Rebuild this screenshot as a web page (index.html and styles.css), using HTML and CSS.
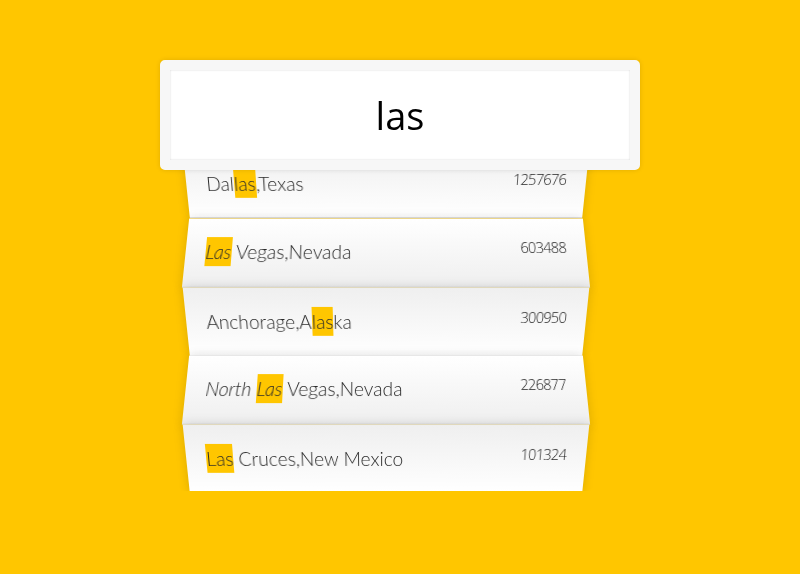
FILE: index.html
```html
<!DOCTYPE html>
<html>
<head>
<meta charset="utf-8">
<title>Type Ahead</title>
<link rel="stylesheet" href="styles.css">
</head>
<body>
  <form class="search-form">
    <input type="text" class="search" value="las" placeholder="City or State">
    <ul class="suggestions">
      <li class="item odd"><span class="name">Dal<span class="hl">las</span>,Texas</span><span class="population">1257676</span></li>
      <li class="item even"><span class="name"><span class="hl it">Las</span> Vegas,Nevada</span><span class="population">603488</span></li>
      <li class="item odd"><span class="name">Anchorage,A<span class="hl">las</span>ka</span><span class="population">300950</span></li>
      <li class="item even"><span class="name"><span class="it">North</span> <span class="hl it">Las</span> Vegas,Nevada</span><span class="population">226877</span></li>
      <li class="item odd"><span class="name"><span class="hl">Las</span> Cruces,New Mexico</span><span class="population">101324</span></li>
    </ul>
  </form>
</body>
</html>
```
FILE: styles.css
```css
html {
  box-sizing: border-box;
  background: #ffc600;
  font-family: "Lato", "Open Sans", sans-serif;
  font-size: 19.2px;
  font-weight: 300;
}
*, *::before, *::after {
  box-sizing: inherit;
}
body {
  margin: 0;
}
.search-form {
  width: 400px;
  margin: 60px auto 0;
}
.search {
  display: block;
  position: relative;
  z-index: 2;
  width: 480px;
  height: 110px;
  margin: 0 0 -23px -40px;
  padding: 20px;
  text-align: center;
  outline: 0;
  border: 10px solid #f7f7f7;
  border-radius: 5px;
  background: #fff;
  color: #000;
  font-family: "Open Sans", sans-serif;
  font-size: 38px;
  font-weight: 400;
  box-shadow: 0 0 5px rgba(0, 0, 0, 0.12), inset 0 0 2px rgba(0, 0, 0, 0.19);
}
.suggestions {
  width: 400px;
  margin: 0 0 0 -14px;
  padding: 0;
  list-style: none;
}
.item {
  display: flex;
  justify-content: space-between;
  margin: 0;
  padding: 20px;
  line-height: 27.75px;
  color: #2a2a2a;
  border-bottom: 1px solid #d8d8d8;
  box-shadow: 0 0 10px rgba(0, 0, 0, 0.14);
}
.item.even {
  transform: perspective(100px) rotateX(3deg) translateY(2px) scale(1.001);
  background: linear-gradient(to bottom, #ffffff 0%, #efefef 100%);
}
.item.odd {
  transform: perspective(100px) rotateX(-3deg) translateY(3px);
  background: linear-gradient(to top, #ffffff 0%, #efefef 100%);
}
.population {
  font-family: "Open Sans", sans-serif;
  font-size: 14.5px;
  font-weight: 300;
  letter-spacing: -0.7px;
  line-height: 20px;
  color: #1a1a1a;
}
.hl {
  background: #ffc600;
  padding: 3px 0;
}
.it {
  font-style: italic;
}
```
